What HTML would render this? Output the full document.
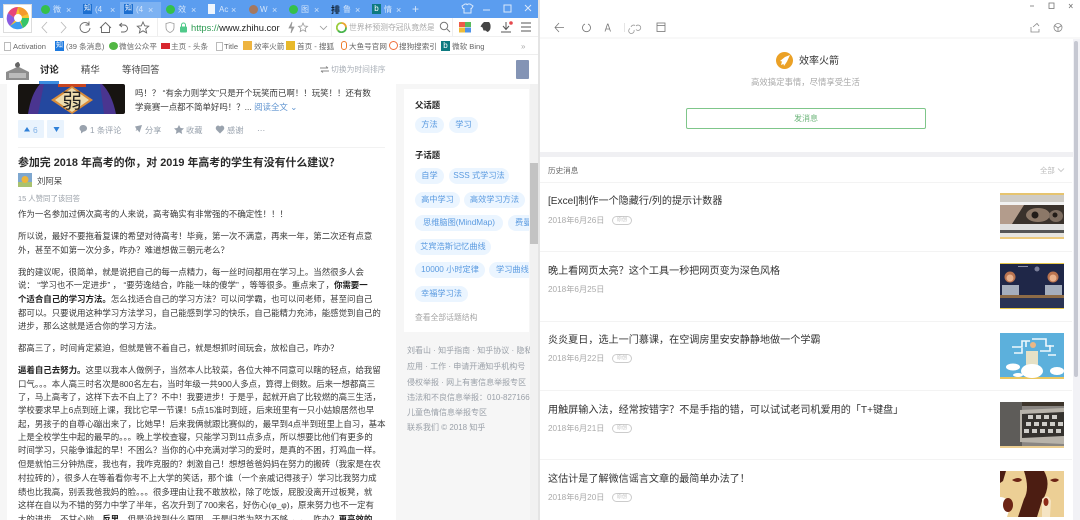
<!DOCTYPE html>
<html><head><meta charset="utf-8">
<style>
html,body{margin:0;padding:0;width:1080px;height:520px;overflow:hidden;background:#fff}
#r{position:relative;width:1080px;height:520px;overflow:hidden;filter:blur(.3px);font-family:"Liberation Sans","Noto Sans CJK SC",sans-serif;background:#fff}
#r div,#r svg{position:absolute}
.t{white-space:nowrap;line-height:14px;height:14px}
.l{left:18px;margin-top:1px;font-size:8.45px;color:#3a3a3a;white-space:nowrap;line-height:14px;height:14px}
.l b{color:#1e1e1e}
.tb{color:#d5e6fb;font-size:8px;top:3px}
.x{color:#cfe2fa;font-size:9px;top:3px}
.bm{font-size:7.6px;color:#666;top:40px}
.tag{background:#ebf5ff;border-radius:9px;color:#5a9ae0;font-size:8.2px;line-height:16px;height:16px;text-align:center;white-space:nowrap;overflow:hidden}
.f{left:407px;font-size:8px;color:#9aa0a8}
.h{left:548px;margin-top:2px;font-size:10.1px;color:#333}
.d{left:548px;margin-top:1px;font-size:8.2px;color:#aaa}
.p{left:612px;width:18px;height:7px;border:1px solid #ccc;border-radius:5px;font-size:5px;line-height:7px;text-align:center;color:#bbb}
.hr{left:540px;width:532px;height:1px;background:#f3f3f3}
.a{top:124px;font-size:8.2px;color:#9aa3ae}
</style></head><body><div id="r">

<!-- left window -->
<div style="left:0;top:0;width:539px;height:520px;background:#f6f6f6"></div>
<div style="left:0;top:0;width:539px;height:18px;background:#5b9def"></div>
<div style="left:120px;top:2px;width:41px;height:16px;background:#7db2f2"></div>
<div style="left:0;top:18px;width:539px;height:18px;background:#fff"></div>
<div style="left:0;top:36px;width:539px;height:19px;background:#fff;border-top:1px solid #f0f0f0;border-bottom:1px solid #eee;box-sizing:border-box"></div>
<div style="left:0;top:55px;width:539px;height:29px;background:#fff"></div>

<!-- logo -->
<div style="left:3px;top:4px;width:29px;height:29px;background:#fff;border:1px solid #ddd;box-sizing:border-box"></div>
<svg style="left:6px;top:6px" width="24" height="24" viewBox="0 0 24 24">
<circle cx="12" cy="12" r="11" fill="#f7c531"/>
<path d="M12 1A11 11 0 0 0 2 7l7 5z" fill="#e8457a"/>
<path d="M2 7A11 11 0 0 0 4 20l6-7z" fill="#8a5be0"/>
<path d="M4 20A11 11 0 0 0 17 22l-4-8z" fill="#3c9cf0"/>
<path d="M17 22A11 11 0 0 0 23 12l-9 0z" fill="#35c46a"/>
<path d="M12 1A11 11 0 0 1 22 8l-8 3z" fill="#f59a2c"/>
<circle cx="12" cy="12" r="4" fill="#fff"/></svg>

<!-- tabs -->
<div style="left:41px;top:5px;width:9px;height:9px;border-radius:50%;background:#35c04a"></div><div class="t tb" style="left:53px">微</div><div class="t x" style="left:66px">×</div>
<div style="left:83px;top:4px;width:9px;height:10px;background:#1d6fd0;color:#fff;font-size:7px;line-height:10px;text-align:center">知</div><div class="t tb" style="left:95px">(4</div><div class="t x" style="left:110px">×</div>
<div style="left:124px;top:4px;width:9px;height:10px;background:#1d6fd0;color:#fff;font-size:7px;line-height:10px;text-align:center">知</div><div class="t tb" style="left:136px">(4</div><div class="t x" style="left:148px">×</div>
<div style="left:166px;top:5px;width:9px;height:9px;border-radius:50%;background:#35c04a"></div><div class="t tb" style="left:178px">效</div><div class="t x" style="left:191px">×</div>
<div style="left:208px;top:4px;width:7px;height:10px;background:#eef5fd"></div><div class="t tb" style="left:219px">Ac</div><div class="t x" style="left:231px">×</div>
<div style="left:249px;top:5px;width:9px;height:9px;border-radius:50%;background:#a5785f"></div><div class="t tb" style="left:260px">W</div><div class="t x" style="left:272px">×</div>
<div style="left:289px;top:5px;width:9px;height:9px;border-radius:50%;background:#35c04a"></div><div class="t tb" style="left:301px">图</div><div class="t x" style="left:314px">×</div>
<div class="t" style="left:331px;top:3px;font-size:9px;font-weight:bold;color:#123">排</div><div class="t tb" style="left:343px">鲁</div><div class="t x" style="left:355px">×</div>
<div style="left:372px;top:4px;width:9px;height:10px;background:#0e7a80;color:#fff;font-size:8px;line-height:10px;text-align:center">b</div><div class="t tb" style="left:384px">情</div><div class="t x" style="left:396px">×</div>
<div class="t" style="left:412px;top:2px;font-size:12px;color:#d5e6fb">+</div>
<svg style="left:460px;top:2px" width="76" height="14" viewBox="0 0 76 14" fill="none" stroke="#dbe9fb">
<path d="M2 4l3-2h1.500q.5 1.500 1.500 0h2l3 2-1.500 2.500H11V11H4V6.500H3z"/><path d="M23 8h7"/><rect x="44" y="3" width="7" height="7"/><path d="M65 3l6 6M71 3l-6 6"/></svg>

<!-- toolbar icons -->
<svg style="left:38px;top:20px" width="125" height="15" viewBox="0 0 125 15" fill="none" stroke="#666" stroke-width=".9">
<path d="M9 2L4 7.500 9 13" stroke="#bbb"/><path d="M23 2l5 5.500L23 13" stroke="#bbb"/>
<path d="M51 4.500A5 5 0 1 0 52 8M51 1.500v3.500h-3.500"/>
<path d="M62 8l5.500-5.500L73 8M63.500 7v5.500h8V7"/>
<path d="M84 3l-2.500 2 2.500 2M82 5h4a3.500 3.500 0 0 1 0 7h-3"/>
<path d="M105 2l1.700 3.800 4 .4-3 2.700.9 4-3.600-2.100-3.600 2.100.9-4-3-2.700 4-.4z"/></svg>
<div style="left:157px;top:18px;width:1px;height:18px;background:#eee"></div>
<svg style="left:165px;top:21px" width="24" height="13" viewBox="0 0 24 13" fill="none"><path d="M1 2.500L5 1.500l4 1v4q0 3.500-4 5-4-1.500-4-5z" stroke="#999" stroke-width=".8"/><rect x="15" y="5.500" width="7" height="6" rx="1" fill="#4fc98a"/><path d="M16.500 6V4a2 2 0 0 1 4 0v2" stroke="#4fc98a"/></svg>
<div class="t" style="left:191px;top:21px;font-size:9.4px;color:#222"><span style="color:#2e9b53">https://</span>www.zhihu.cor</div>
<svg style="left:285px;top:20px" width="45" height="15" viewBox="0 0 45 15" fill="none" stroke="#999" stroke-width=".8">
<path d="M7 2L4 8h3l-1 5 3-6H6z" fill="#999"/><path d="M18 3l1.300 3 3.200.3-2.400 2.100.7 3.100-2.800-1.700-2.800 1.700.7-3.100-2.400-2.100 3.200-.3z"/><path d="M35 6l3.500 3.500L42 6"/></svg>
<div style="left:331px;top:18px;width:1px;height:18px;background:#eee"></div>
<svg style="left:336px;top:22px" width="11" height="11" viewBox="0 0 11 11" fill="none" stroke-width="1.800"><path d="M5.500 1a4.500 4.500 0 0 1 4.500 4.500" stroke="#eba52f"/><path d="M10 5.500A4.500 4.500 0 0 1 2 8.500" stroke="#4ab54e"/><path d="M2 8.500A4.500 4.500 0 0 1 5.500 1" stroke="#9ccd3e"/></svg>
<div class="t" style="left:349px;top:21px;font-size:7.8px;width:85px;overflow:hidden;color:#a8a8a8">世界杯预测夺冠队竟然是</div>
<svg style="left:439px;top:21px" width="12" height="12" viewBox="0 0 12 12" fill="none" stroke="#777"><circle cx="5" cy="5" r="3.700"/><path d="M8 8l3 3"/></svg>
<div style="left:452px;top:18px;width:1px;height:18px;background:#eee"></div>
<svg style="left:459px;top:22px" width="12" height="11" viewBox="0 0 12 11"><rect width="6" height="5" fill="#ee5a4a"/><rect x="6" width="6" height="5" fill="#58b95c"/><rect y="5.500" width="6" height="5" fill="#eebc3a"/><rect x="6" y="5.500" width="6" height="5" fill="#4f93e8"/></svg>
<svg style="left:480px;top:21px" width="12" height="12" viewBox="0 0 12 12"><path d="M2 3l2-2 5 0q2 2 1.500 6-.5 3-3 4l-2-1.500-2 0-1-3-2-1z" fill="#444"/></svg>
<svg style="left:500px;top:20px" width="14" height="14" viewBox="0 0 14 14" fill="none" stroke="#555"><path d="M6 2v7M3 6l3 3.500L9 6M1 12h10"/><circle cx="11" cy="3" r="1.800" fill="#e5484d" stroke="none"/></svg>
<svg style="left:520px;top:21px" width="12" height="12" viewBox="0 0 12 12" stroke="#555"><path d="M1 2h10M1 6h10M1 10h10"/></svg>

<!-- bookmarks -->
<div style="left:4px;top:42px;width:5px;height:7px;border:1px solid #bbb"></div><div class="t bm" style="left:13px">Activation</div>
<div style="left:55px;top:41px;width:9px;height:10px;background:#1d7ae0;color:#fff;font-size:7px;line-height:10px;text-align:center">知</div><div class="t bm" style="left:66px">(39 条消息)</div>
<div style="left:109px;top:42px;width:9px;height:8px;border-radius:50%;background:#52b744"></div><div class="t bm" style="left:119px">微信公众平</div>
<div style="left:161px;top:43px;width:9px;height:6px;background:#d8262e"></div><div class="t bm" style="left:171px">主页 - 头条</div>
<div style="left:216px;top:42px;width:5px;height:7px;border:1px solid #bbb"></div><div class="t bm" style="left:224px">Title</div>
<div style="left:243px;top:41px;width:9px;height:9px;background:#eeb440"></div><div class="t bm" style="left:254px">效率火箭</div>
<div style="left:286px;top:41px;width:9px;height:9px;background:#e8b92b"></div><div class="t bm" style="left:297px">首页 - 搜狐</div>
<div style="left:341px;top:41px;width:6px;height:9px;border:1.500px solid #ee7c2c;border-radius:4px;box-sizing:border-box"></div><div class="t bm" style="left:349px">大鱼号官网</div>
<div style="left:389px;top:41px;width:9px;height:9px;border:1.500px solid #ee6f3c;border-radius:50%;box-sizing:border-box"></div><div class="t bm" style="left:399px">搜狗搜索引</div>
<div style="left:441px;top:41px;width:9px;height:10px;background:#0e7a80;color:#fff;font-size:8px;line-height:10px;text-align:center">b</div><div class="t bm" style="left:452px">微软 Bing</div>
<div class="t" style="left:521px;top:40px;font-size:8px;color:#aaa">»</div>

<!-- zhihu header -->
<svg style="left:6px;top:60px" width="23" height="20" viewBox="0 0 23 20"><path d="M0 12l7-3 4-2V2h2v5l4 2 6 3v8H0z" fill="#8d8d8d"/><rect x="3" y="13" width="17" height="5" fill="#bbb"/><circle cx="11.500" cy="5" r="2.500" fill="#666"/></svg>
<div class="t" style="left:40px;top:63px;font-size:9.4px;color:#222;font-weight:bold">讨论</div>
<div class="t" style="left:81px;top:63px;font-size:9.4px;color:#444">精华</div>
<div class="t" style="left:122px;top:63px;font-size:9.4px;color:#444">等待回答</div>
<svg style="left:320px;top:66px" width="9" height="7" viewBox="0 0 9 7" stroke="#888" fill="none"><path d="M0 2h8M6 .5L8 2M9 5H1M3 6.500L1 5"/></svg>
<div class="t" style="left:331px;top:63px;font-size:7.8px;color:#aab0b8">切换为时间排序</div>
<div style="left:516px;top:60px;width:13px;height:19px;background:#8494b5;border-radius:1px"></div>

<!-- answer card -->
<div style="left:7px;top:84px;width:389px;height:436px;background:#fff"></div>
<svg style="left:18px;top:84px" width="107" height="30" viewBox="0 0 107 30">
<rect width="107" height="30" rx="2" fill="#171411"/>
<path d="M10 30q3-20 12-30h62q10 10 14 30z" fill="#4a3590"/>
<path d="M20 30L26 0h56l4 30z" fill="#24489f"/>
<rect x="40" y="0" width="28" height="3" fill="#c8451f"/>
<path d="M54 2L75 16 54 30 33 16z" fill="#d98d3a"/>
<path d="M54 4L71 16 54 28 37 16z" fill="#ecdcae"/>
<text x="54" y="24" text-anchor="middle" font-size="20" fill="#222" font-family="Noto Sans CJK SC">弱</text>
</svg>
<div style="left:39px;top:81px;width:20px;height:3px;background:#3b8de0"></div>
<div class="t" style="left:135px;top:86px;font-size:8.45px;color:#3a3a3a">吗&#65281;&#65311; “有余力则学文”只是开个玩笑而已啊&#65281;&#65281;玩笑&#65281;&#65281;还有数</div>
<div class="t" style="left:135px;top:100px;font-size:8.45px;color:#3a3a3a">学竟赛一点都不简单好吗&#65281;&#65311;... <span style="color:#5f94d0">阅读全文</span> <span style="color:#5f94d0">⌄</span></div>

<div style="left:18px;top:120px;width:26px;height:18px;background:#e9f3fd;border-radius:1px"></div>
<div style="left:47px;top:120px;width:17px;height:18px;background:#e9f3fd;border-radius:1px"></div>
<svg style="left:24px;top:125px" width="36" height="8" viewBox="0 0 36 8"><path d="M0 6.500L3 2l3 4.500z" fill="#2f80d8"/><path d="M29.500 2h6L32.500 7z" fill="#2f80d8"/></svg>
<div class="t" style="left:33px;top:123px;font-size:8.4px;color:#7fb0e6">6</div>
<svg style="left:79px;top:125px" width="190" height="10" viewBox="0 0 190 10" fill="#9aa3ae">
<path d="M4 0a3.800 3.300 0 0 1 .5 6.600L2 8.500V6A3.500 3.300 0 0 1 4 0z"/>
<path d="M56 1.500L63 0l-2.500 7.500L58.500 5l-2 1 1-1.800z"/>
<path d="M100 0l1.600 3 3.400.4-2.500 2.300.7 3.300-3.200-1.700-3.200 1.700.7-3.300L95 3.400l3.400-.4z"/>
<path d="M141 8.500l-3.500-3.500q-1.500-2 0-3.700t3.500 .2q2-1.900 3.500-.2t0 3.700z"/></svg>
<div class="t a" style="left:90px">1 条评论</div>
<div class="t a" style="left:145px">分享</div>
<div class="t a" style="left:186px">收藏</div>
<div class="t a" style="left:227px">感谢</div>
<div class="t a" style="left:257px;color:#8a93a0">···</div>
<div style="left:18px;top:147px;width:367px;height:1px;background:#f2f2f2"></div>

<div class="t" style="left:18px;top:156px;font-size:10.9px;font-weight:bold;color:#2a2a2a">参加完 2018 年高考的你&#65292;对 2019 年高考的学生有没有什么建议&#65311;</div>
<svg style="left:18px;top:173px" width="14" height="14" viewBox="0 0 14 14"><rect width="14" height="14" fill="#7ea7cf"/><rect y="9" width="14" height="5" fill="#a9c26f"/><circle cx="7" cy="6.500" r="3.500" fill="#eeb53a"/></svg>
<div class="t" style="left:37px;top:174px;font-size:8.4px;color:#444">刘阿呆</div>
<div class="t" style="left:18px;top:192px;font-size:7.4px;color:#9aa0a8">15 人赞同了该回答</div>
<div class="l" style="top:206px">作为一名参加过俩次高考的人来说&#65292;高考确实有非常强的不确定性&#65281;&#65281;&#65281;</div>
<div class="l" style="top:228px">所以说&#65292;最好不要拖着复课的希望对待高考&#65281;毕竟&#65292;第一次不满意&#65292;再来一年&#65292;第二次还有点意</div>
<div class="l" style="top:242px">外&#65292;甚至不如第一次分多&#65292;咋办&#65311;难道想做三朝元老么&#65311;</div>
<div class="l" style="top:264px">我的建议呢&#65292;很简单&#65292;就是说把自己的每一点精力&#65292;每一丝时间都用在学习上。当然很多人会</div>
<div class="l" style="top:277px">说&#65306; “学习也不一定进步” &#65292; “要劳逸结合&#65292;咋能一味的傻学” &#65292;等等很多。重点来了&#65292;<b>你需要一</b></div>
<div class="l" style="top:291px"><b>个适合自己的学习方法。</b>怎么找适合自己的学习方法&#65311;可以问学霸&#65292;也可以问老师&#65292;甚至问自己</div>
<div class="l" style="top:305px">都可以。只要说用这种学习方法学习&#65292;自己能感到学习的快乐&#65292;自己能精力充沛&#65292;能感觉到自己的</div>
<div class="l" style="top:318px">进步&#65292;那么这就是适合你的学习方法。</div>
<div class="l" style="top:340px">都高三了&#65292;时间肯定紧迫&#65292;但就是管不着自己&#65292;就是想抓时间玩会&#65292;放松自己&#65292;咋办&#65311;</div>
<div class="l" style="top:362px"><b>逼着自己去努力。</b>这里以我本人做例子&#65292;当然本人比较菜&#65292;各位大神不同意可以瞎的轻点&#65292;给我留</div>
<div class="l" style="top:376px">口气。。。本人高三时名次是800名左右&#65292;当时年级一共900人多点&#65292;算得上倒数。后来一想都高三</div>
<div class="l" style="top:389px">了&#65292;马上高考了&#65292;这样下去不白上了&#65311;不中&#65281;我要进步&#65281;于是乎&#65292;起就开启了比较燃的高三生活&#65292;</div>
<div class="l" style="top:402px">学校要求早上6点到班上课&#65292;我比它早一节课&#65281;5点15准时到班&#65292;后来班里有一只小姑娘居然也早</div>
<div class="l" style="top:416px">起&#65292;男孩子的自尊心蹦出来了&#65292;比她早&#65281;后来我俩就跟比赛似的&#65292;最早到4点半到班里上自习&#65292;基本</div>
<div class="l" style="top:429px">上是全校学生中起的最早的。。。晚上学校查寝&#65292;只能学习到11点多点&#65292;所以想要比他们有更多的</div>
<div class="l" style="top:442px">时间学习&#65292;只能争谁起的早&#65281;不困么&#65311;当你的心中充满对学习的爱时&#65292;是真的不困&#65292;打鸡血一样。</div>
<div class="l" style="top:456px">但是就怕三分钟热度&#65292;我也有&#65292;我咋克服的&#65311;刺激自己&#65281;想想爸爸妈妈在努力的搬砖&#65288;我家是在农</div>
<div class="l" style="top:470px">村拉砖的&#65289;&#65292;很多人在等着看你考不上大学的笑话&#65292;那个谁&#65288;一个亲戚记得孩子&#65289;学习比我努力成</div>
<div class="l" style="top:484px">绩也比我高&#65292;别丢我爸我妈的脸。。。很多理由让我不敢放松&#65292;除了吃饭&#65292;屁股没离开过板凳&#65292;就</div>
<div class="l" style="top:497px">这样在自以为不错的努力中学了半年&#65292;名次升到了700来名&#65292;好伤心(φ_φ)&#65292;原来努力也不一定有</div>
<div class="l" style="top:511px">大的进步。不甘心呦&#65292;<b>反思</b>&#65292;但是没找到什么原因&#65292;于是归类为努力不够→→。咋办&#65311;<b>更高效的</b></div>

<!-- sidebar -->
<div style="left:404px;top:89px;width:125px;height:243px;background:#fff;overflow:hidden" id="sb">
<div class="t" style="left:11px;top:9px;font-size:8.4px;font-weight:bold;color:#222">父话题</div>
<div class="tag" style="left:11px;top:28px;width:29px">方法</div>
<div class="tag" style="left:45px;top:28px;width:29px">学习</div>
<div class="t" style="left:11px;top:59px;font-size:8.4px;font-weight:bold;color:#222">子话题</div>
<div class="tag" style="left:11px;top:79px;width:29px">自学</div>
<div class="tag" style="left:45px;top:79px;width:60px">SSS 式学习法</div>
<div class="tag" style="left:11px;top:103px;width:45px">高中学习</div>
<div class="tag" style="left:60px;top:103px;width:61px">高效学习方法</div>
<div class="tag" style="left:11px;top:126px;width:88px">思维脑图(MindMap)</div>
<div class="tag" style="left:104px;top:126px;width:40px;text-align:left;padding-left:7px">费曼</div>
<div class="tag" style="left:11px;top:150px;width:76px">艾宾浩斯记忆曲线</div>
<div class="tag" style="left:11px;top:173px;width:70px">10000 小时定律</div>
<div class="tag" style="left:85px;top:173px;width:50px;text-align:left;padding-left:7px">学习曲线</div>
<div class="tag" style="left:11px;top:197px;width:53px">幸福学习法</div>
<div class="t" style="left:11px;top:222px;font-size:7.8px;color:#a5a5a5">查看全部话题结构</div>
</div>
<div class="t f" style="top:344px">刘看山 · 知乎指南 · 知乎协议 · 隐私政</div>
<div class="t f" style="top:360px">应用 · 工作 · 申请开通知乎机构号</div>
<div class="t f" style="top:376px">侵权举报 · 网上有害信息举报专区</div>
<div class="t f" style="top:391px">违法和不良信息举报&#65306;010-8271660</div>
<div class="t f" style="top:406px">儿童色情信息举报专区</div>
<div class="t f" style="top:421px">联系我们 © 2018 知乎</div>
<div style="left:530px;top:84px;width:9px;height:436px;background:#f1f1f1"></div>
<div style="left:530px;top:163px;width:8px;height:81px;background:#c3c3c3"></div>
<div style="left:538px;top:0;width:2px;height:520px;background:#e4e4e4"></div>

<!-- right window -->
<div style="left:540px;top:0;width:540px;height:520px;background:#fff"></div>
<svg style="left:1017px;top:0" width="63" height="12" viewBox="0 0 63 12" fill="none" stroke="#777" stroke-width=".8"><path d="M13 6h4"/><rect x="32" y="3" width="5" height="5.500"/><path d="M52 4l3.500 4M55.500 4L52 8"/></svg>
<svg style="left:552px;top:20px" width="115" height="15" viewBox="0 0 115 15" fill="none" stroke="#777" stroke-width=".8">
<path d="M12 7.500H3M7 3L3 7.500 7 12"/>
<path d="M36 4a4 4 0 1 1-3 0"/><path d="M53 11.500l2.500-7.500h.5l2.500 7.500M54 9h4" />
<path d="M79 7a2.700 2.700 0 0 1 4-1.500M84 6a2.700 2.700 0 1 1 0 3.500M78 8.500a2.700 2.700 0 1 0 4 1.500" stroke="#999"/>
<rect x="105" y="3" width="8" height="8.500"/><path d="M105 5.500h8"/></svg>
<div style="left:624px;top:23px;width:1px;height:9px;background:#e5e5e5"></div>
<svg style="left:1030px;top:20px" width="44" height="15" viewBox="0 0 44 15" fill="none" stroke="#888" stroke-width=".8"><path d="M1 7v5h8V9M3 7l4-3.500L9 6"/><circle cx="28" cy="7.500" r="4"/><path d="M24.500 5.500L28 8l3.500-2.500M28 8v3.500"/></svg>
<div style="left:540px;top:37px;width:540px;height:2px;background:#f8f8f8"></div>
<!-- right scrollbar -->
<div style="left:1073px;top:39px;width:7px;height:481px;background:#f2f2f6"></div>
<div style="left:1074px;top:41px;width:4px;height:336px;background:#c6c8d2;border-radius:2px"></div>

<svg style="left:776px;top:52px" width="17" height="17" viewBox="0 0 17 17"><circle cx="8.500" cy="8.500" r="8.500" fill="#eba126"/><path d="M14 3L9 5 4 9l2 .5L5 13l2.500-1 .5 2 3-4.500z" fill="#fff"/></svg>
<div class="t" style="left:799px;top:55px;font-size:10px;color:#333">效率火箭</div>
<div class="t" style="left:751px;top:75px;font-size:8.4px;color:#aaa">高效搞定事情&#65292;尽情享受生活</div>
<div style="left:686px;top:108px;width:240px;height:21px;box-sizing:border-box;border:1px solid #7fc68a;border-radius:2px;text-align:center;font-size:8px;line-height:19px;color:#6cb57a">发消息</div>
<div style="left:540px;top:152px;width:533px;height:5px;background:#f0f0f3"></div>
<div class="t" style="left:548px;top:164px;font-size:7.6px;color:#666">历史消息</div>
<div class="t" style="left:1040px;top:164px;font-size:7.4px;color:#bbb">全部</div>
<svg style="left:1057px;top:168px" width="8" height="5" viewBox="0 0 8 5" fill="none" stroke="#ccc"><path d="M1 .5l3 3 3-3"/></svg>
<div class="hr" style="top:182px"></div>

<div class="t h" style="top:193px">[Excel]制作一个隐藏行/列的提示计数器</div>
<div class="t d" style="top:213px">2018年6月26日</div><div class="p" style="top:216px">原创</div>
<div class="hr" style="top:251px"></div>
<div class="t h" style="top:263px">晚上看网页太亮&#65311;这个工具一秒把网页变为深色风格</div>
<div class="t d" style="top:282px">2018年6月25日</div>
<div class="hr" style="top:321px"></div>
<div class="t h" style="top:332px">炎炎夏日&#65292;选上一门慕课&#65292;在空调房里安安静静地做一个学霸</div>
<div class="t d" style="top:351px">2018年6月22日</div><div class="p" style="top:354px">原创</div>
<div class="hr" style="top:390px"></div>
<div class="t h" style="top:402px">用触屏输入法&#65292;经常按错字&#65311;不是手指的错&#65292;可以试试老司机爱用的「T+键盘」</div>
<div class="t d" style="top:421px">2018年6月21日</div><div class="p" style="top:424px">原创</div>
<div class="hr" style="top:459px"></div>
<div class="t h" style="top:471px">这估计是了解微信谣言文章的最简单办法了&#65281;</div>
<div class="t d" style="top:490px">2018年6月20日</div><div class="p" style="top:493px">原创</div>

<!-- thumbs -->
<svg style="left:1000px;top:193px" width="64" height="46" viewBox="0 0 64 46">
<rect width="64" height="46" fill="#e8e6e2"/><rect width="64" height="2" fill="#e6c46f"/><rect y="44" width="64" height="2" fill="#ecc97c"/>
<rect y="2" width="64" height="7" fill="#cfccc6"/><rect y="9" width="64" height="4" fill="#f2f2f2"/>
<rect y="12" width="64" height="19" fill="#3a322c"/>
<path d="M0 12h24L12 31H0z" fill="#b39c8c"/>
<ellipse cx="38" cy="22" rx="12" ry="7" fill="#8c7868"/><ellipse cx="56" cy="23" rx="7" ry="6" fill="#7d6d60"/><circle cx="35" cy="22" r="3.500" fill="#221c18"/><circle cx="55" cy="22" r="2.500" fill="#221c18"/>
<rect y="31" width="64" height="6" fill="#dfdfdf"/><rect y="37" width="64" height="3" fill="#555"/><rect y="40" width="64" height="4" fill="#e6e4df"/></svg>
<svg style="left:1000px;top:263px" width="64" height="46" viewBox="0 0 64 46">
<rect width="64" height="46" fill="#1f2748"/><rect width="64" height="1" fill="#e8c84a"/><rect y="45" width="64" height="1" fill="#e8c84a"/>
<circle cx="37" cy="6" r="2.500" fill="#7a7f9a"/><rect x="18" y="3" width="10" height="1" fill="#8b90a8"/>
<circle cx="10" cy="14" r="5.500" fill="#b9734f"/><circle cx="53" cy="14" r="5.500" fill="#b9734f"/><circle cx="10" cy="15" r="3.500" fill="#e8b08c"/><circle cx="53" cy="15" r="3.500" fill="#e8b08c"/>
<rect x="2" y="22" width="17" height="10" fill="#a5aebd"/><rect x="45" y="22" width="17" height="10" fill="#a5aebd"/>
<rect y="32" width="64" height="3" fill="#8d6b47"/><rect y="35" width="64" height="10" fill="#2b3454"/></svg>
<svg style="left:1000px;top:333px" width="64" height="46" viewBox="0 0 64 46">
<rect width="64" height="46" fill="#5cb0dc"/><rect y="44" width="64" height="2" fill="#eac65f"/>
<g stroke="#eef7fc" stroke-width="1.600" fill="none"><path d="M12 14h10v-6h8M32 6h14v7h8M14 20h8v-5M40 18h10v-6M26 14v-6M48 22h8"/></g>
<rect x="26" y="18" width="12" height="14" fill="#e6e1c6"/><circle cx="33" cy="12" r="3" fill="#eab785"/>
<g fill="#fff"><ellipse cx="32" cy="38" rx="11" ry="7"/><ellipse cx="13" cy="34" rx="7" ry="3.500"/><ellipse cx="57" cy="38" rx="7" ry="4"/><ellipse cx="18" cy="42" rx="5" ry="2"/></g></svg>
<svg style="left:1000px;top:402px" width="64" height="46" viewBox="0 0 64 46">
<rect width="64" height="46" fill="#8a8682"/><rect width="22" height="46" fill="#5e5c59"/><rect x="22" width="42" height="4" fill="#3e362c"/>
<path d="M20 8l44-2v36L20 40z" fill="#b8b3aa"/><path d="M22 12l42-2v24l-42 2z" fill="#35322e"/>
<g fill="#cfcdc8"><rect x="28" y="13" width="5" height="4"/><rect x="36" y="13" width="5" height="4"/><rect x="44" y="13" width="5" height="4"/><rect x="52" y="13" width="5" height="4"/><rect x="26" y="20" width="5" height="4"/><rect x="34" y="20" width="5" height="4"/><rect x="42" y="20" width="5" height="4"/><rect x="50" y="20" width="5" height="4"/><rect x="58" y="20" width="5" height="4"/><rect x="24" y="27" width="5" height="4"/><rect x="32" y="27" width="5" height="4"/><rect x="40" y="27" width="5" height="4"/><rect x="48" y="27" width="5" height="4"/><rect x="56" y="27" width="5" height="4"/></g>
<rect y="44" width="64" height="2" fill="#edcf92"/></svg>
<svg style="left:1000px;top:471px" width="64" height="46" viewBox="0 0 64 46">
<rect width="64" height="46" fill="#eccf95"/>
<path d="M24 0h20q8 14-2 30l-5 16H18l6-18q6-10 0-28z" fill="#4c1d12"/>
<path d="M0 0h6l-3 10-3 2z" fill="#4c1d12"/>
<path d="M0 26q8 0 10 10l-3 10H0z" fill="#fff"/><ellipse cx="8" cy="34" rx="5" ry="7" fill="#6c2415"/>
<path d="M12 9q7-4 10 0-4 4-10 0z" fill="#6c2415"/><path d="M50 9q6-3 9 0-4 4-9 0z" fill="#6c2415"/>
<path d="M42 28q6-6 9 2l-1 16h-8z" fill="#f5e4c3"/><ellipse cx="46" cy="31" rx="2.500" ry="4" fill="#8d2a18"/></svg>

</div></body></html>
